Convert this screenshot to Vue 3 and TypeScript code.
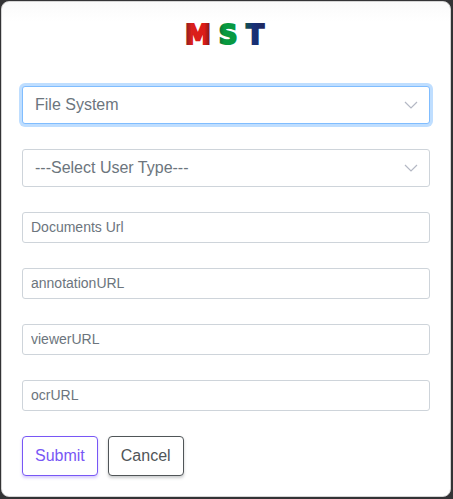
<script setup lang="ts">
import { onMounted, reactive, ref } from 'vue'

type UrlKey = 'documents' | 'annotation' | 'viewer' | 'ocr'

const urlFields: { key: UrlKey; label: string }[] = [
  { key: 'documents', label: 'Documents Url' },
  { key: 'annotation', label: 'annotationURL' },
  { key: 'viewer', label: 'viewerURL' },
  { key: 'ocr', label: 'ocrURL' },
]

const initial = () => ({
  source: 'fs',
  userType: '',
  urls: { documents: '', annotation: '', viewer: '', ocr: '' } as Record<UrlKey, string>,
})

const form = reactive(initial())
const sourceSelect = ref<HTMLSelectElement | null>(null)

function reset(): void {
  Object.assign(form, initial())
}

onMounted(() => sourceSelect.value?.focus())
</script>

<template>
  <main class="page">
    <form class="card" @submit.prevent>
      <svg class="logo" viewBox="0 0 112 26" role="img" aria-label="MST">
        <defs>
          <linearGradient id="red" x1="0" y1="0" x2="1" y2="0">
            <stop offset="0" stop-color="#7a2020" />
            <stop offset="0.25" stop-color="#d91f1c" />
            <stop offset="0.75" stop-color="#dc1c18" />
            <stop offset="1" stop-color="#6e1a18" />
          </linearGradient>
          <linearGradient id="green" x1="0" y1="0" x2="1" y2="0">
            <stop offset="0" stop-color="#0c6a33" />
            <stop offset="0.3" stop-color="#08993f" />
            <stop offset="1" stop-color="#079943" />
          </linearGradient>
          <linearGradient id="blue" x1="0" y1="0" x2="1" y2="0">
            <stop offset="0" stop-color="#12504f" />
            <stop offset="0.4" stop-color="#17307a" />
            <stop offset="1" stop-color="#20285c" />
          </linearGradient>
        </defs>
        <text class="letter" x="28" y="22" fill="url(#red)" stroke="url(#red)">M</text>
        <text class="letter" x="58" y="22" fill="url(#green)" stroke="url(#green)">S</text>
        <text class="letter" x="85" y="22" fill="url(#blue)" stroke="url(#blue)">T</text>
      </svg>

      <div class="fields">
        <div class="select-wrap">
          <select ref="sourceSelect" v-model="form.source" class="select" aria-label="Source">
            <option value="fs">File System</option>
          </select>
          <svg class="chevron" viewBox="0 0 14 8" aria-hidden="true">
            <path d="M1 1l6 6 6-6" />
          </svg>
        </div>
        <div class="select-wrap">
          <select v-model="form.userType" class="select" aria-label="User type">
            <option value="">---Select User Type---</option>
          </select>
          <svg class="chevron" viewBox="0 0 14 8" aria-hidden="true">
            <path d="M1 1l6 6 6-6" />
          </svg>
        </div>
        <input
          v-for="field in urlFields"
          :key="field.key"
          v-model="form.urls[field.key]"
          class="input"
          type="text"
          :placeholder="field.label"
          :aria-label="field.label"
        />
        <div class="actions">
          <button class="button primary" type="submit">Submit</button>
          <button class="button secondary" type="button" @click="reset">Cancel</button>
        </div>
      </div>
    </form>
  </main>
</template>

<style>
body {
  background: #333335;
}
</style>

<style scoped>
.page {
  padding: 1px 2px 2px 1px;
  font-family: "Liberation Sans", Arial, sans-serif;
}

.card {
  box-sizing: border-box;
  padding: 20px;
  border: 1px solid #d4d4d4;
  border-radius: 8px;
  background: linear-gradient(#fafafa, #ffffff 20px);
}

.logo {
  display: block;
  width: 112px;
  height: 26px;
  margin: 0 auto 38px;
  overflow: visible;
}

.letter {
  font-family: "DejaVu Sans", sans-serif;
  font-size: 26px;
  font-weight: 700;
  text-anchor: middle;
  stroke-width: 2;
}

.fields {
  display: flex;
  flex-direction: column;
  gap: 25px;
}

.select-wrap {
  display: grid;
  align-items: center;
}

.select,
.input {
  box-sizing: border-box;
  width: 100%;
  margin: 0;
  border: 1px solid #ced4da;
  border-radius: 3px;
  background: #ffffff;
  color: #6c757d;
  font-family: inherit;
  outline: none;
}

.select {
  grid-area: 1 / 1;
  height: 38px;
  padding: 0 32px 1px 12px;
  appearance: none;
  font-size: 16px;
}

.chevron {
  grid-area: 1 / 1;
  justify-self: end;
  width: 14px;
  height: 8px;
  margin-right: 12px;
  fill: none;
  stroke: #b4b8c4;
  stroke-width: 1.2;
  pointer-events: none;
}

.input {
  height: 31px;
  padding: 0 8px 2px;
  font-size: 14px;
}

.input::placeholder {
  color: #6c757d;
  opacity: 1;
}

.select:focus,
.input:focus {
  border-color: #80bdff;
  box-shadow: 0 0 0 3px #bfdeff;
}

.actions {
  display: flex;
  gap: 10px;
}

.button {
  height: 40px;
  padding: 0 12px;
  border: 1px solid;
  border-radius: 4px;
  background: #ffffff;
  font-family: inherit;
  font-size: 16px;
  cursor: pointer;
}

.primary {
  border-color: #7857f5;
  color: #7857f5;
  box-shadow: 0 2px 3px rgba(120, 87, 245, 0.3);
}

.secondary {
  border-color: #505558;
  color: #505558;
  box-shadow: 0 2px 3px rgba(80, 85, 88, 0.3);
}
</style>
